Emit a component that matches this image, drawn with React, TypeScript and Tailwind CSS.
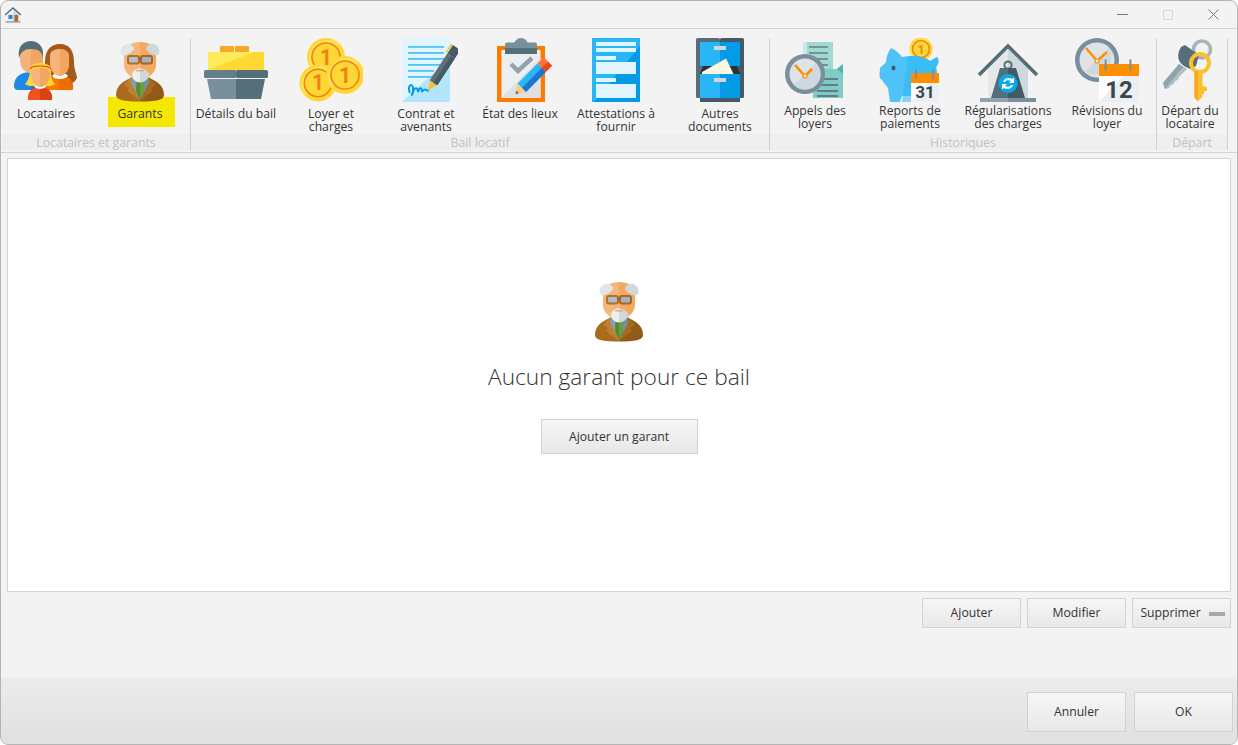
import React from 'react';

const HouseIcon = () => (
    <svg width="18" height="16" viewBox="0 0 18 16">
        <path d="M3 7 L15 7 L15 14.5 L3 14.5Z" fill="#eceff1" />
        <path d="M9 2 L15 7 L15 14.5 L9 14.5Z" fill="#cfd8dc" />
        <path d="M1 8 L9 1 L17 8" fill="none" stroke="#546e7a" strokeWidth="1.4" />
        <rect x="4.5" y="8" width="4" height="4" fill="#1e88e5" />
        <rect x="10.5" y="8" width="3.5" height="6.5" fill="#a9692a" />
        <rect x="1.5" y="14.3" width="15" height="1.2" fill="#78909c" />
    </svg>
);

const LocatairesIcon = () => (
    <svg width="64" height="64" viewBox="0 0 64 64">
        <path d="M0 48 C0 38 8 34 17 34 C25 34 30 38 30 48 L30 52 L4 52 C1 52 0 50 0 48Z" fill="#1e88e5" />
        <path d="M17 34 C25 34 30 38 30 48 L30 52 L17 52Z" fill="#1976d2" />
        <path d="M6 15 C6 8 10 4 17 4 C24 4 29 8 29 15 L29 22 C29 30 23 35 17 35 C11 35 6 30 6 22Z" fill="#f4b27a" />
        <path d="M17 4 C24 4 29 8 29 15 L29 22 C29 30 23 35 17 35Z" fill="#f2a561" />
        <path d="M5 20 C3 8 10 3 17 3 C24 3 30 8 29 20 C28 14 25 11 17 11 C10 11 7 14 5 20Z" fill="#546e7a" />
        <path d="M31 24 C31 12 37 6 46 6 C55 6 60 12 60 24 C60 32 63 36 63 40 C60 46 56 46 52 44 L37 44 C33 40 31 32 31 24Z" fill="#a5591a" />
        <path d="M30 52 C30 42 38 38 46 38 C54 38 60 42 59 52Z" fill="#f57c00" />
        <path d="M45 38 C54 38 60 42 59 52 L45 52Z" fill="#ef6c00" />
        <path d="M38 38 C40 42 52 42 54 38 L52 36 L40 36Z" fill="#ffffff" />
        <path d="M36 18 C36 13 40 11 46 11 C51 11 55 14 55 19 L55 26 C55 33 50 38 46 38 C41 38 36 33 36 26Z" fill="#f6b37a" />
        <path d="M46 11 C51 11 55 14 55 19 L55 26 C55 33 50 38 46 38Z" fill="#f4a660" />
        <path d="M14 62 C13 54 18 49 26 49 C34 49 39 54 38 62Z" fill="#f4511e" />
        <path d="M26 49 C34 49 39 54 38 62 L26 62Z" fill="#d84315" />
        <path d="M20 48 C22 52 30 52 32 48 L31 46 L21 46Z" fill="#ffffff" />
        <path d="M11 46 C15 42 16 36 16 32 C16 27 20 25 26 25 C32 25 37 27 37 32 C37 36 37 42 41 46 C37 49 32 48 30 47 L22 47 C20 48 15 49 11 46Z" fill="#fdd835" />
        <path d="M17 36 C17 31 21 30 26 30 C31 30 36 31 36 36 C36 43 31 49 26 49 C21 49 17 43 17 36Z" fill="#f6b37a" />
        <path d="M26 30 C31 30 36 31 36 36 C36 43 31 49 26 49Z" fill="#f4a660" />
        <path d="M16 31 C18 27 34 27 37 31" fill="none" stroke="#e53935" strokeWidth="1.2" />
    </svg>
);

const GarantIcon = () => (
    <svg width="64" height="64" viewBox="0 0 64 64" className="relative z-10">
        <path d="M32 40 L23 40 C13 44 8 49 8 57 C8 62 16 63.5 32 63.5Z" fill="#ab6b1e" />
        <path d="M32 40 L41 40 C51 44 56 49 56 57 C56 62 48 63.5 32 63.5Z" fill="#915a16" />
        <path d="M23 39 L16 47 L21 50 L19 53 L32 63 L25 44Z" fill="#bf7f30" />
        <path d="M41 39 L48 47 L43 50 L45 53 L32 63 L39 44Z" fill="#a36a20" />
        <path d="M24 36 L32 36 L32 62 L23 45Z" fill="#8b9ea8" />
        <path d="M40 36 L32 36 L32 62 L41 45Z" fill="#78909c" />
        <path d="M28.5 44 L32 44 L32 62 L28 53Z" fill="#558b2f" />
        <path d="M35.5 44 L32 44 L32 62 L36 53Z" fill="#689f38" />
        <path d="M32 4 C23 4 16 8 16 17 L16 27 C16 35 24 41 32 41Z" fill="#f5b67c" />
        <path d="M32 4 C41 4 48 8 48 17 L48 27 C48 35 40 41 32 41Z" fill="#f5a860" />
        <path d="M18 6 C22 5 26 8 26 11 C23 16 17 18 14 17 C11 14 13 7 18 6Z" fill="#e3e6e8" />
        <path d="M46 6 C42 5 38 8 38 11 C41 16 47 18 50 17 C53 14 51 7 46 6Z" fill="#cfd8dc" />
        <rect x="20" y="18" width="11" height="7.5" rx="2" fill="#b0bec5" stroke="#b06f2d" strokeWidth="2" />
        <rect x="33" y="18" width="11" height="7.5" rx="2" fill="#a4b3ba" stroke="#a5672a" strokeWidth="2" />
        <path d="M30 20.5 L34 20.5" stroke="#a5672a" strokeWidth="2" />
        <path d="M32 30 C28 31 24 33 24 37 C24 41 28 44.5 32 44.5Z" fill="#eceff1" />
        <path d="M32 30 C36 31 41 33 41 37 C41 41 36 44.5 32 44.5Z" fill="#cfd8dc" />
        <rect x="28" y="32" width="8" height="1.6" rx="0.8" fill="#f5a860" />
    </svg>
);

const DetailsIcon = () => (
    <svg width="64" height="64" viewBox="0 0 64 64">
        <rect x="16" y="8" width="14" height="7" rx="1" fill="#f9a825" />
        <rect x="31" y="8" width="14" height="7" rx="1" fill="#f9a825" />
        <path d="M4 14 L60 14 L60 34 L4 34Z" fill="#ffd835" />
        <path d="M4 14 L50 14 L4 32Z" fill="#ffea5c" />
        <path d="M3 41 L32 41 L32 61 L7 61Z" fill="#78909c" />
        <path d="M61 41 L32 41 L32 61 L57 61Z" fill="#546e7a" />
        <rect x="0" y="32" width="32" height="8" rx="1.5" fill="#637d8a" />
        <rect x="32" y="32" width="32" height="8" rx="1.5" fill="#546e7a" />
    </svg>
);

const Coin = ({ cx, cy, r }: { cx: number; cy: number; r: number }) => (
    <g>
        <circle cx={cx} cy={cy} r={r} fill="#fdd835" />
        <path d={`M${cx - r * 0.7} ${cy + r * 0.7} A${r} ${r} 0 0 1 ${cx + r * 0.7} ${cy - r * 0.7} Z`} fill="#ffe35a" />
        <circle cx={cx} cy={cy} r={r * 0.74} fill="#fdd835" stroke="#f57f17" strokeWidth="1.6" />
        <text x={cx} y={cy + r * 0.4} textAnchor="middle" fontSize={r * 1.15} fontWeight="700" fill="#f57f17" fontFamily="Roboto, sans-serif">1</text>
    </g>
);

const LoyerIcon = () => (
    <svg width="64" height="64" viewBox="0 0 64 64">
        <Coin cx={27} cy={19} r={19} />
        <Coin cx={19} cy={45} r={18.5} />
        <Coin cx={46} cy={37} r={19} />
    </svg>
);

const ContratIcon = () => (
    <svg width="64" height="64" viewBox="0 0 64 64">
        <rect x="8" y="0" width="48" height="64" fill="#e1f5fe" />
        <path d="M8 64 L56 20 L56 64Z" fill="#b3e5fc" />
        {[8, 14, 20, 26, 32, 38].map(y => (
            <rect key={y} x="14" y={y} width={y > 26 ? 26 : 36} height="1.8" fill="#4fc3f7" />
        ))}
        <path d="M16 55 C13 48 18 44 19 50 C20 56 16 60 19 54 C21 48 24 50 24 54 C26 48 28 50 28 54 C30 50 32 52 35 53" fill="none" stroke="#039be5" strokeWidth="2" />
        <g transform="translate(34 53) rotate(-56.6)">
            <path d="M0 0 L10 -4 L10 4Z" fill="#fbc02d" />
            <rect x="10" y="-4.5" width="32" height="9" fill="#616e76" />
            <rect x="10" y="0" width="32" height="4.5" fill="#455a64" />
            <rect x="42" y="-4.5" width="10" height="9" fill="#455a64" />
            <path d="M42 -6 L52 -6" stroke="#fbc02d" strokeWidth="1.5" />
        </g>
    </svg>
);

const EtatIcon = () => (
    <svg width="64" height="64" viewBox="0 0 64 64">
        <rect x="9" y="8" width="48" height="56" fill="#ff7a00" />
        <rect x="13.5" y="12" width="39" height="48" fill="#eceff1" />
        <path d="M13.5 60 L52.5 20 L52.5 60Z" fill="#e0e0e0" />
        <circle cx="33" cy="7" r="7" fill="#78909c" />
        <rect x="17" y="4.5" width="32" height="6" rx="2" fill="#78909c" />
        <rect x="17" y="10" width="32" height="6" fill="#546e7a" />
        <path d="M23 26 L30 33 L44 20" fill="none" stroke="#90a4ae" strokeWidth="4.5" />
        <g transform="translate(27.5 56) rotate(-45)">
            <path d="M0 0 L9 -6 L9 6Z" fill="#ffcc80" />
            <path d="M0 0 L3 -2 L3 2Z" fill="#546e7a" />
            <rect x="9" y="-6" width="28" height="6" fill="#29b6f6" />
            <rect x="9" y="0" width="28" height="6" fill="#1976d2" />
            <rect x="37" y="-6" width="9" height="6" fill="#ff7043" />
            <rect x="37" y="0" width="9" height="6" fill="#e64a19" />
        </g>
    </svg>
);

const AttestationsIcon = () => (
    <svg width="64" height="64" viewBox="0 0 64 64">
        <rect x="8" y="0" width="48" height="64" fill="#29b6f6" />
        <path d="M56 8 L56 64 L10 64Z" fill="#039be5" />
        <rect x="12" y="4" width="40" height="4" fill="#e1f5fe" />
        <rect x="12" y="10" width="40" height="4" fill="#e1f5fe" />
        <rect x="12" y="18" width="20" height="4" fill="#e1f5fe" />
        <rect x="12" y="24" width="40" height="12" fill="#e1f5fe" />
        <rect x="12" y="40" width="20" height="4" fill="#e1f5fe" />
        <rect x="12" y="46" width="40" height="14" fill="#e1f5fe" />
    </svg>
);

const AutresIcon = () => (
    <svg width="64" height="64" viewBox="0 0 64 64">
        <rect x="12" y="58" width="40" height="6" fill="#455a64" />
        <rect x="8" y="0" width="24" height="60" rx="1.5" fill="#546e7a" />
        <rect x="32" y="0" width="24" height="60" rx="1.5" fill="#455a64" />
        <rect x="12" y="4" width="20" height="24" rx="1" fill="#29b6f6" />
        <rect x="32" y="4" width="20" height="24" rx="1" fill="#039be5" />
        <rect x="26" y="8" width="12" height="4" fill="#cfd8dc" />
        <path d="M12 36 L15 28 L49 28 L52 36Z" fill="#263238" />
        <path d="M14 34 L38 20.5 L45.5 36 L14 36Z" fill="#fff8e1" />
        <rect x="12" y="36" width="20" height="24" rx="1" fill="#29b6f6" />
        <rect x="32" y="36" width="20" height="24" rx="1" fill="#039be5" />
        <rect x="26" y="40" width="12" height="4" fill="#cfd8dc" />
    </svg>
);

const AppelsIcon = () => (
    <svg width="64" height="64" viewBox="0 0 64 64">
        <rect x="20" y="4" width="30" height="46" fill="#9fdacf" />
        <rect x="20" y="4" width="4" height="46" fill="#c8ebe5" />
        {[8, 14, 20, 26, 32].map(y => (
            <rect key={y} x="26" y={y} width="19" height="2" fill="#78909c" />
        ))}
        <path d="M30 31 L54 31 L60 26 L60 60 L30 60Z" fill="#80cbc4" />
        <path d="M54 31 L60 26 L60 36 Z" fill="#4db6ac" />
        {[40, 46, 52, 57].map(y => (
            <rect key={y} x="34" y={y} width="21" height="2" fill="#607d8b" />
        ))}
        <circle cx="22" cy="36" r="20" fill="#78909c" />
        <circle cx="22" cy="36" r="15.5" fill="#dfe3e5" />
        <path d="M11 47 L33 25 A15.5 15.5 0 0 1 11 47Z" fill="#cfd8dc" />
        <path d="M12 27 L22 38 L29 31" fill="none" stroke="#ff8f00" strokeWidth="2.6" />
        <circle cx="22" cy="38" r="2" fill="#fff" stroke="#ff8f00" strokeWidth="1.2" />
    </svg>
);

const Calendar = ({ x, y, w, h, head, text, size }: { x: number; y: number; w: number; h: number; head: number; text: string; size: number }) => (
    <g>
        <rect x={x} y={y} width={w} height={h} fill="#eceff1" />
        <path d={`M${x} ${y + h} L${x} ${y + head} L${x + w * 0.6} ${y + head}Z`} fill="#ffffff" />
        <rect x={x} y={y} width={w} height={head} fill="#ff8f00" />
        <rect x={x + w * 0.14} y={y - head * 0.4} width="2" height={head} rx="1" fill="#78909c" />
        <rect x={x + w * 0.76} y={y - head * 0.4} width="2" height={head} rx="1" fill="#78909c" />
        <text x={x + w / 2} y={y + h - 4} textAnchor="middle" fontSize={size} fontWeight="700" fill="#37474f" fontFamily="Roboto, sans-serif">{text}</text>
    </g>
);

const ReportsIcon = () => (
    <svg width="64" height="64" viewBox="0 0 64 64">
        <Coin cx={43} cy={11} r={11.5} />
        <path d="M13 10 C18 12 22 16 24 19 C34 17 46 18 52 23 L59 19 C62 22 60 27 58 29 C60 36 59 44 54 50 L52 64 L42 64 L40 58 L24 58 L22 64 L12 64 L10 50 C7 46 5 44 4 42 C0 40 2 34 2 30 C3 28 6 27 8 24 C8 20 10 14 13 10Z" fill="#4fc3f7" />
        <path d="M30 18 C40 17 47 19 52 23 L59 19 C62 22 60 27 58 29 C60 36 59 44 54 50 L52 64 L24 64 L30 18Z" fill="#29b6f6" opacity="0.55" />
        <ellipse cx="15.5" cy="30" rx="2" ry="2.6" fill="#455a64" />
        <Calendar x={33} y={35} w={28} h={29} head={10} text="31" size={17} />
    </svg>
);

const RegulIcon = () => (
    <svg width="64" height="64" viewBox="0 0 64 64">
        <path d="M32 8 L52 27 L52 61 L32 61Z" fill="#cfd8dc" />
        <path d="M32 8 L12 27 L12 61 L32 61Z" fill="#e4e8ea" />
        <path d="M3 37 L32 8 L61 37" fill="none" stroke="#546e7a" strokeWidth="3.6" />
        <circle cx="32" cy="27" r="3.6" fill="none" stroke="#546e7a" strokeWidth="2" />
        <path d="M24 30 L32 30 L32 60 L15 60Z" fill="#546e7a" />
        <path d="M40 30 L32 30 L32 60 L49 60Z" fill="#455a64" />
        <rect x="4" y="60" width="28" height="4" fill="#90a4ae" />
        <rect x="32" y="60" width="28" height="4" fill="#78909c" />
        <circle cx="32" cy="45.5" r="9.5" fill="#03a9f4" />
        <path d="M27 44 C28 40 33 39 36 41 L38 39.5 L38 45 L33 45 L35 43 C33 42 30 42 29 44Z" fill="#ffffff" />
        <path d="M37 47 C36 51 31 52 28 50 L26 51.5 L26 46 L31 46 L29 48 C31 49 34 49 35 47Z" fill="#ffffff" />
    </svg>
);

const RevisionsIcon = () => (
    <svg width="64" height="64" viewBox="0 0 64 64" className="overflow-visible">
        <circle cx="22" cy="22" r="22" fill="#78909c" />
        <circle cx="22" cy="22" r="17.5" fill="#dfe3e5" />
        <path d="M10 34 L34 10 A17.5 17.5 0 0 1 10 34Z" fill="#cfd8dc" />
        <path d="M11 10 L22 23 L32 14" fill="none" stroke="#ff8f00" strokeWidth="2.4" />
        <circle cx="22" cy="23" r="2" fill="#fff" stroke="#ff8f00" strokeWidth="1.2" />
        <Calendar x={24} y={26} w={40} h={38} head={12} text="12" size={24} />
    </svg>
);

const DepartIcon = () => (
    <svg width="64" height="64" viewBox="0 0 64 64">
        <circle cx="44" cy="11.5" r="8.5" fill="none" stroke="#a7b3b9" strokeWidth="3.6" />
        <path d="M21 26 L5 45 L7 51 L11 50 L13 47 L16 46 L17 43 L20 42 L21 39 L29 31Z" fill="#b0bec5" />
        <path d="M5 45 L21 26 L25 29 L7 51Z" fill="#90a4ae" />
        <path d="M23 9 L27 7 L41 17 L38 28 L32 31 L26 28 C20 24 18 17 23 9Z" fill="#546e7a" />
        <circle cx="42" cy="25" r="9" fill="none" stroke="#fbc02d" strokeWidth="4" />
        <path d="M36.5 33 L44.5 33 L44.5 48 L49 49 L49 53 L46 53 L46 56 L44.5 56 L44.5 59 L40 63 L36.5 60Z" fill="#fbc02d" />
        <path d="M36.5 33 L40 33 L40 63 L36.5 60Z" fill="#f9a825" />
    </svg>
);

type Item = { label: string; w: string; Icon: React.ComponentType; mark?: boolean };

const groups: { title: string; w: string; short?: boolean; items: Item[] }[] = [
    {
        title: 'Locataires et garants',
        w: 'w-[188px]',
        items: [
            { label: 'Locataires', w: 'w-[88px]', Icon: LocatairesIcon },
            { label: 'Garants', w: 'w-[100px]', Icon: GarantIcon, mark: true },
        ],
    },
    {
        title: 'Bail locatif',
        w: 'w-[578px]',
        items: [
            { label: 'Détails du bail', w: 'w-[90px]', Icon: DetailsIcon },
            { label: 'Loyer et\ncharges', w: 'w-[100px]', Icon: LoyerIcon },
            { label: 'Contrat et\navenants', w: 'w-[90px]', Icon: ContratIcon },
            { label: 'État des lieux', w: 'w-[98px]', Icon: EtatIcon },
            { label: 'Attestations à\nfournir', w: 'w-[94px]', Icon: AttestationsIcon },
            { label: 'Autres\ndocuments', w: 'ml-[8px] w-[98px]', Icon: AutresIcon },
        ],
    },
    {
        title: 'Historiques',
        w: 'w-[386px]',
        short: true,
        items: [
            { label: 'Appels des\nloyers', w: 'w-[90px]', Icon: AppelsIcon },
            { label: 'Reports de\npaiements', w: 'w-[100px]', Icon: ReportsIcon },
            { label: 'Régularisations\ndes charges', w: 'w-[96px]', Icon: RegulIcon },
            { label: 'Révisions du\nloyer', w: 'ml-[2px] w-[98px]', Icon: RevisionsIcon },
        ],
    },
    {
        title: 'Départ',
        w: 'w-[70px]',
        short: true,
        items: [{ label: 'Départ du\nlocataire', w: 'w-[66px]', Icon: DepartIcon }],
    },
];

const btn = 'flex items-center justify-center border border-[#d2d2d2] bg-gradient-to-b from-[#f6f6f6] to-[#e8e8e8] pt-px text-[12.2px] text-[#333]';

const App = () => {
    return (
        <div className="h-[745px] w-[1238px] overflow-hidden bg-white font-['Open_Sans',sans-serif]">
            <div className="flex h-full flex-col overflow-hidden rounded-lg border border-[#b4b4b4] bg-[#f3f3f3]">
                <div className="flex h-[28px] shrink-0 items-center justify-between border-b border-[#d4d4d4] pl-[3px] pr-[18px]">
                    <HouseIcon />
                    <div className="flex items-center gap-[35px]">
                        <div className="h-px w-[11px] bg-[#777]" />
                        <div className="h-[10px] w-[10px] rounded-[1px] border border-[#d6d6d6]" />
                        <svg width="11" height="11" viewBox="0 0 11 11">
                            <path d="M0.5 0.5 L10.5 10.5 M10.5 0.5 L0.5 10.5" stroke="#777" strokeWidth="1" />
                        </svg>
                    </div>
                </div>

                <div className="flex h-[123px] shrink-0 items-start pl-px">
                    {groups.map(group => (
                        <React.Fragment key={group.title}>
                            <div className={`flex h-[121px] flex-col ${group.w}`}>
                                <div className="flex h-[105px] pt-[9px]">
                                    {group.items.map(({ label, w, Icon, mark }) => (
                                        <div key={label} className={`relative flex shrink-0 flex-col items-center ${w}`}>
                                            {mark && <span className="absolute left-[18px] top-[59px] h-[30px] w-[67px] bg-[#f5e800]" />}
                                            <Icon />
                                            <span className={`relative z-10 whitespace-pre-line text-center text-[12.2px] leading-[13px] text-[#333] ${group.short ? 'mt-[2px]' : 'mt-[5px]'}`}>
                                                {label}
                                            </span>
                                        </div>
                                    ))}
                                </div>
                                <div className="flex h-[16px] items-center justify-center bg-[#eeeeee] pt-[3px] text-[12.3px] text-[#c2c2c2]">
                                    {group.title}
                                </div>
                            </div>
                            <div className="mt-[9px] h-[112px] w-px shrink-0 bg-[#d0d0d0]" />
                        </React.Fragment>
                    ))}
                </div>

                <div className="h-px shrink-0 bg-[#d4d4d4]" />

                <div className="mx-[6px] mt-[5px] flex h-[434px] shrink-0 flex-col items-center border border-[#d4d4d4] bg-white pt-[119px]">
                    <GarantIcon />
                    <h2 className="mt-[19px] text-[22.7px] font-light leading-[32px] text-[#333]">Aucun garant pour ce bail</h2>
                    <button className={`${btn} mt-[26px] h-[35px] w-[157px]`}>Ajouter un garant</button>
                </div>

                <div className="mt-[6px] flex shrink-0 justify-end gap-[6px] pr-[6px]">
                    <button className={`${btn} h-[30px] w-[99px]`}>Ajouter</button>
                    <button className={`${btn} h-[30px] w-[99px]`}>Modifier</button>
                    <button className={`${btn} h-[30px] w-[99px] gap-[8px] pl-[2px]`}>
                        Supprimer
                        <span className="h-[4px] w-[16px] bg-[#a8a8a8]" />
                    </button>
                </div>

                <div className="mt-auto flex h-[67px] shrink-0 items-start justify-end gap-[8px] bg-gradient-to-b from-[#ececec] to-[#e0e0e0] pr-[4px] pt-[15px]">
                    <button className={`${btn} h-[40px] w-[99px]`}>Annuler</button>
                    <button className={`${btn} h-[40px] w-[99px]`}>OK</button>
                </div>
            </div>
        </div>
    );
};

export default App;
